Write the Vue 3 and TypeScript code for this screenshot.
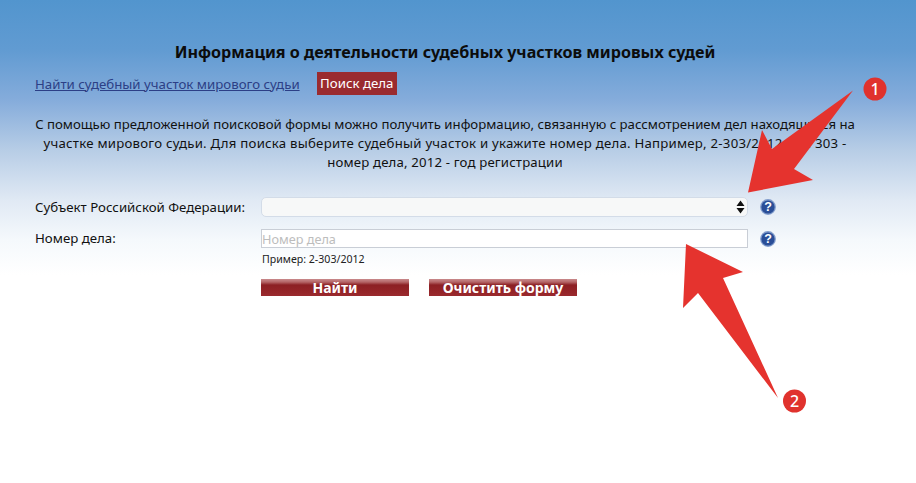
<script setup lang="ts">
const title = 'Информация о деятельности судебных участков мировых судей'
</script>

<template>
  <main class="page">
    <h1 class="title">{{ title }}</h1>
    <nav class="tabs">
      <a class="link" href="#">Найти судебный участок мирового судьи</a>
      <span class="tab-active">Поиск дела</span>
    </nav>
    <p class="intro">
      <span class="line">С помощью предложенной поисковой формы можно получить информацию, связанную с рассмотрением дел находящихся на</span>
      <span class="line wide">участке мирового судьи. Для поиска выберите судебный участок и укажите номер дела. Например, 2-303/2012, где 303 -</span>
      <span class="line mid">номер дела, 2012 - год регистрации</span>
    </p>
    <form class="form" @submit.prevent>
      <label class="label">Субъект Российской Федерации:</label>
      <div class="select">
        <svg class="updown" width="9" height="14" viewBox="0 0 9 14"><path d="M4.5 0.5 8.5 6H.5ZM.5 8h8l-4 5.5Z" fill="#111" /></svg>
      </div>
      <svg class="help" width="16" height="16" viewBox="0 0 16 16">
        <circle cx="8" cy="8" r="7.9" fill="#7f9bcb" />
        <circle cx="8" cy="8" r="6.6" fill="#2a4e97" />
        <text x="8" y="12.3" text-anchor="middle" class="q">?</text>
      </svg>
      <label class="label second">Номер дела:</label>
      <input class="input second" placeholder="Номер дела" />
      <svg class="help second" width="16" height="16" viewBox="0 0 16 16">
        <circle cx="8" cy="8" r="7.9" fill="#7f9bcb" />
        <circle cx="8" cy="8" r="6.6" fill="#2a4e97" />
        <text x="8" y="12.3" text-anchor="middle" class="q">?</text>
      </svg>
      <div class="example">Пример: 2-303/2012</div>
      <div class="buttons">
        <button class="btn">Найти</button>
        <button class="btn" type="reset">Очистить форму</button>
      </div>
    </form>
    <svg class="overlay" width="916" height="483" viewBox="0 0 916 483">
      <path d="M853 90.5 794 169 813 180 748 192.5 762 130 772 149Z" fill="#e5332e" />
      <path d="M686 244 743 272 723 278 778 398 698 293 683 308Z" fill="#e5332e" />
      <circle cx="875" cy="89" r="11.5" fill="#e0322d" />
      <text x="875" y="94.5" text-anchor="middle" class="badge">1</text>
      <circle cx="794.5" cy="401" r="11.5" fill="#e0322d" />
      <text x="794.5" y="406.5" text-anchor="middle" class="badge">2</text>
    </svg>
  </main>
</template>

<style>
html, body { margin: 0; background: #fff; }
</style>

<style scoped>
.page {
  position: relative;
  width: 916px;
  height: 483px;
  overflow: hidden;
  box-sizing: border-box;
  padding: 41px 61px 0 35px;
  background: linear-gradient(180deg, #5295ce 0, #619bd2 50px, #85acdb 100px, #b7cde6 150px, #e0e9f4 200px, #f5f9fc 240px, #ffffff 275px);
  font-family: "Noto Sans", sans-serif;
  color: #111;
}
.title {
  margin: 0;
  font-size: 16.15px;
  line-height: 22px;
  font-weight: 700;
  text-align: center;
  color: #0c0c0c;
}
.tabs {
  display: flex;
  align-items: center;
  gap: 17px;
  margin-top: 9px;
  height: 23px;
}
.link {
  color: #2c3f86;
  font-size: 13.25px;
  text-decoration: underline;
}
.tab-active {
  background: #9a2b2f;
  color: #fff;
  font-size: 13.25px;
  line-height: 23px;
  padding: 0 3.5px;
}
.intro {
  margin: 20px 0 0;
  font-size: 13.2px;
  line-height: 19px;
  text-align: center;
  white-space: nowrap;
}
.line { display: block; }
.wide { letter-spacing: 0.245px; }
.mid { letter-spacing: 0.17px; }
.form {
  display: grid;
  grid-template-columns: 226px 487px 40px;
  margin-top: 25px;
  align-items: center;
}
.label { font-size: 13.25px; line-height: 19px; }
.select {
  height: 20px;
  box-sizing: border-box;
  border: 1px solid #d3dce8;
  border-radius: 5px;
  background: #f7f8f8;
  display: flex;
  align-items: center;
  justify-content: flex-end;
  padding-right: 2px;
}
.second { margin-top: 12px; }
.help { justify-self: start; margin-left: 12px; }
.q { font: 700 12.5px "Liberation Sans", sans-serif; fill: #fff; }
.input {
  height: 19px;
  box-sizing: border-box;
  border: 1px solid #c9ced6;
  background: #fff;
  padding: 0;
  font: 12.7px "Noto Sans", sans-serif;
  outline: none;
}
.input::placeholder { color: #bdbdbd; opacity: 1; }
.example {
  grid-column: 2;
  margin-top: 4px;
  padding-left: 1px;
  font-size: 10.6px;
  line-height: 14px;
  color: #222;
}
.buttons {
  grid-column: 2;
  display: flex;
  gap: 20px;
  margin-top: 13px;
}
.btn {
  width: 148px;
  height: 17px;
  border: 0;
  padding: 0;
  background: linear-gradient(180deg, #c98a8c 0, #b56668 3px, #8c2024 6px, #942428 12px, #9a2a2e 17px);
  color: #fff;
  font: 700 14px/17px "Noto Sans", sans-serif;
}
.overlay {
  position: absolute;
  left: 0;
  top: 0;
  pointer-events: none;
}
.badge {
  font: 500 16px "Noto Sans", sans-serif;
  fill: #fff;
}
</style>
